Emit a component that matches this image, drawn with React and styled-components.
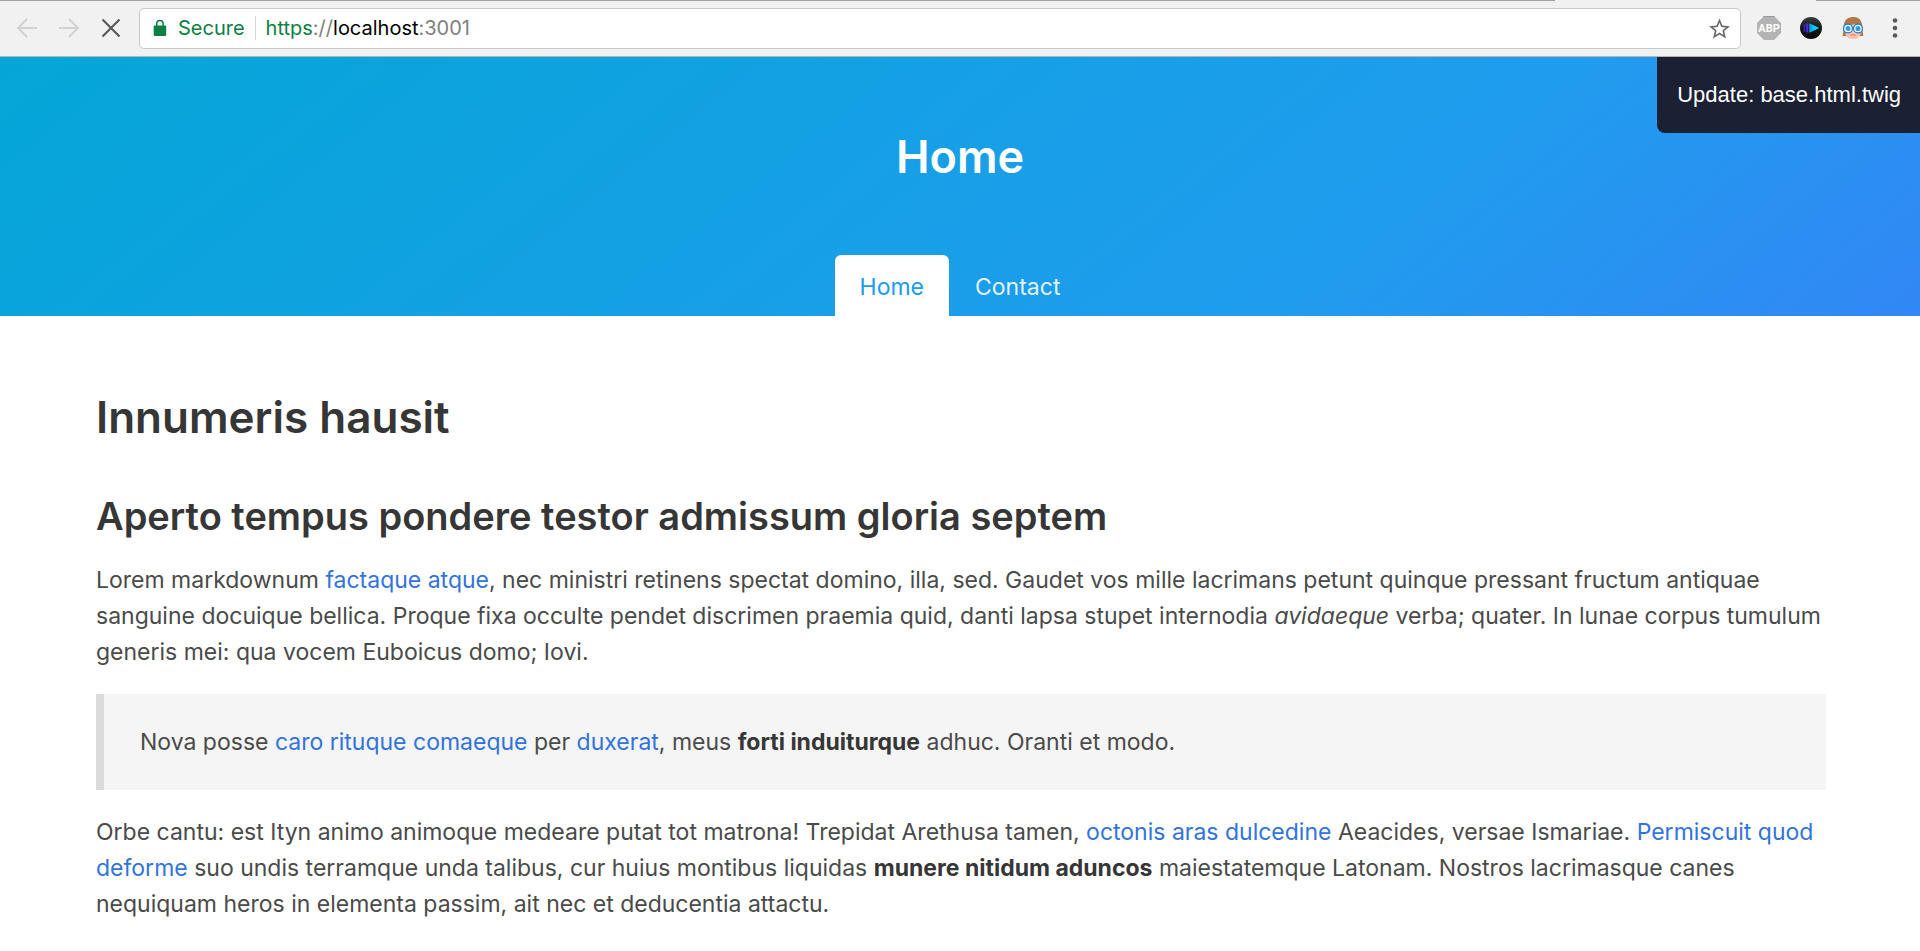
import React from "react";
import styled, { createGlobalStyle } from "styled-components";

const GlobalStyle = createGlobalStyle`
  *, *::before, *::after { box-sizing: border-box; }
  body {
    margin: 0;
    background: #ffffff;
    color: #4a4a4a;
    font-family: Inter, "Liberation Sans", sans-serif;
    font-size: 23px;
    line-height: 36px;
  }
`;

const Chrome = styled.header`
  background: #f1f1f1;
  border-bottom: 1px solid #b4b4b4;
`;

const TabEdge = styled.div`
  display: flex;
  justify-content: space-between;
  height: 1px;
`;

const EdgeLine = styled.span`
  width: ${(p) => p.$width};
  background: #a3a0a3;
`;

const Toolbar = styled.div`
  display: flex;
  align-items: center;
  height: 55px;
  padding: 0 13px 1px 15px;
`;

const ToolButton = styled.button`
  display: flex;
  flex: none;
  align-items: center;
  justify-content: center;
  width: 24px;
  height: 24px;
  padding: 0;
  border: 0;
  background: none;
  color: ${(p) => p.$color || "#5a5a5a"};

  svg { display: block; }
`;

const NavButtons = styled.div`
  display: flex;
  gap: 18px;
  margin-right: 16px;
`;

const Extensions = styled.div`
  display: flex;
  gap: 18px;
  margin-left: 16px;
`;

const AddressBar = styled.div`
  display: flex;
  flex: 1;
  align-items: center;
  height: 41px;
  padding: 0 9px 0 12px;
  border: 1px solid #c8c8c8;
  border-radius: 5px;
  background: #ffffff;
  font-size: 20px;
  line-height: 24px;
`;

const Secure = styled.span`
  display: flex;
  align-items: center;
  gap: 11px;
  padding-right: 10px;
  border-right: 1px solid #d8d8d8;
  color: #0b8043;
`;

const Url = styled.div`
  flex: 1;
  padding-left: 10px;
  outline: none;
  white-space: nowrap;
`;

const UrlPart = styled.span`
  color: ${(p) => p.$color};
`;

const Hero = styled.section`
  position: relative;
  background: linear-gradient(141deg, #04a6d7 0%, #209cee 71%, #3287f5 100%);
`;

const HeroBody = styled.div`
  padding: 73px 96px 71px;
  text-align: center;
`;

const HeroTitle = styled.p`
  margin: 0;
  color: #ffffff;
  font-size: 45px;
  font-weight: 600;
  line-height: 54px;
`;

const Tabs = styled.nav`
  display: flex;
  justify-content: center;
  gap: 1px;
`;

const Tab = styled.a`
  height: 61px;
  padding: 14px 25px 0;
  border-radius: 6px 6px 0 0;
  background: ${(p) => (p.$active ? "#ffffff" : "transparent")};
  color: ${(p) => (p.$active ? "#209cee" : "rgba(255, 255, 255, 0.9)")};
  text-decoration: none;
`;

const Notice = styled.div`
  position: absolute;
  top: 0;
  right: 0;
  padding: 26px 19px 26px 20px;
  border-bottom-left-radius: 8px;
  background: #1b2032;
  color: #ffffff;
  font-family: "Liberation Sans", sans-serif;
  font-size: 22px;
  line-height: 24px;
`;

const Content = styled.main`
  padding: 74px 94px 24px 96px;
`;

const Heading1 = styled.h1`
  margin: 0 0 48px;
  color: #363636;
  font-size: 44px;
  font-weight: 600;
  line-height: 54px;
`;

const Heading2 = styled.h2`
  margin: 0 0 22px;
  color: #363636;
  font-size: 38px;
  font-weight: 600;
  line-height: 48px;
`;

const Paragraph = styled.p`
  margin: 0;
`;

const Quote = styled.blockquote`
  margin: 24px 0;
  padding: 30px 36px;
  border-left: 8px solid #dbdbdb;
  background: #f5f5f5;
`;

const TextLink = styled.a`
  color: #3273dc;
  text-decoration: none;
`;

const Strong = styled.strong`
  color: #363636;
  font-weight: 700;
`;

const ArrowIcon = ({ forward }) => (
  <svg width="24" height="24" viewBox="0 0 24 24" fill="none" stroke="currentColor" strokeWidth="2">
    <path d={forward ? "M2 12h18M12 3l9 9-9 9" : "M22 12H4M12 3l-9 9 9 9"} />
  </svg>
);

const StopIcon = () => (
  <svg width="24" height="24" viewBox="0 0 24 24" fill="none" stroke="currentColor" strokeWidth="2.2">
    <path d="M3.500 3.500l17 17M20.500 3.500l-17 17" />
  </svg>
);

const LockIcon = () => (
  <svg width="15" height="18" viewBox="0 0 15 18">
    <path d="M4.700 8V4.600a3.200 3.200 0 0 1 6.400 0V8" fill="none" stroke="#0b8043" strokeWidth="1.500" />
    <rect x="1.700" y="6.500" width="12.500" height="10.500" rx="1" fill="#0b8043" />
  </svg>
);

const StarIcon = () => (
  <svg width="23" height="23" viewBox="1 0.5 22 22" fill="currentColor">
    <path d="M22 9.240l-7.190-.620L12 2 9.190 8.630 2 9.240l5.460 4.730L5.820 21 12 17.270 18.180 21l-1.630-7.030L22 9.240zM12 15.400l-3.760 2.270 1-4.280-3.320-2.880 4.380-.380L12 6.100l1.710 4.040 4.380.380-3.320 2.880 1 4.280L12 15.400z" />
  </svg>
);

const AdBlockIcon = () => (
  <svg width="24" height="24" viewBox="0 0 24 24">
    <path d="M7 0h10l7 7v10l-7 7H7l-7-7V7z" fill="#b3b3b3" />
    <path d="M7 0h10l1 1H6z" fill="#989898" />
    <text x="12" y="16" textAnchor="middle" fill="#ffffff" fontFamily="Roboto, sans-serif" fontSize="11" fontWeight="700">ABP</text>
  </svg>
);

const PlayerIcon = () => (
  <svg width="24" height="24" viewBox="0 0 24 24">
    <defs>
      <linearGradient id="player-disc" x1="0" y1="0" x2="0" y2="1">
        <stop offset="0" stopColor="#3b3b3b" />
        <stop offset="0.5" stopColor="#16181c" />
        <stop offset="1" stopColor="#080808" />
      </linearGradient>
      <linearGradient id="player-arrow" x1="0" y1="0" x2="1" y2="0">
        <stop offset="0" stopColor="#1590f5" />
        <stop offset="0.6" stopColor="#00dcf5" />
      </linearGradient>
    </defs>
    <circle cx="12" cy="12" r="11" fill="url(#player-disc)" />
    <path d="M5.500 8v8" stroke="#3924b8" strokeWidth="1.600" />
    <path d="M8.300 7.500v9" stroke="#4930ee" strokeWidth="2" />
    <path d="M10.300 7.300l10 4.700-10 4.700z" fill="url(#player-arrow)" />
  </svg>
);

const AvatarIcon = () => (
  <svg width="24" height="24" viewBox="0 0 24 24">
    <path d="M2.500 14C1.800 5.500 5.500 1 12.500 1c6 0 9.500 4.500 9 13l.8 6h-4V9H6l-.3 11H1.500z" fill="#b57a4a" />
    <path d="M4.500 8.500h15V17c0 4-3.500 6-7.500 6s-7.500-2-7.500-6z" fill="#f8c3aa" />
    <path d="M3 10.500c5-.5 8-2 10-5 1 2 4 3.500 8 4.500C20 4 17 1.500 12.500 1.500S4 4 3 10.500z" fill="#b27748" />
    <path d="M9.500 19h5" stroke="#dc8078" strokeWidth="1.200" />
    <circle cx="7" cy="12.500" r="5" fill="#1a7ace" />
    <circle cx="17" cy="12.500" r="5" fill="#1a7ace" />
    <path d="M10.500 12.300h3" stroke="#1a7ace" strokeWidth="1.800" />
    <circle cx="7" cy="12.500" r="3.200" fill="#2a9df0" stroke="#ffffff" strokeWidth="1.300" />
    <circle cx="17" cy="12.500" r="3.200" fill="#2a9df0" stroke="#ffffff" strokeWidth="1.300" />
  </svg>
);

const MenuIcon = () => (
  <svg width="24" height="24" viewBox="0 0 24 24" fill="currentColor">
    <circle cx="12" cy="4.500" r="2.300" />
    <circle cx="12" cy="12" r="2.300" />
    <circle cx="12" cy="19.500" r="2.300" />
  </svg>
);

function BrowserChrome() {
  return (
    <Chrome>
      <TabEdge>
        <EdgeLine $width="81%" />
        <EdgeLine $width="5.4%" />
      </TabEdge>
      <Toolbar>
        <NavButtons>
          <ToolButton $color="#d2d2d2" aria-label="Back"><ArrowIcon /></ToolButton>
          <ToolButton $color="#d2d2d2" aria-label="Forward"><ArrowIcon forward /></ToolButton>
          <ToolButton aria-label="Stop loading"><StopIcon /></ToolButton>
        </NavButtons>
        <AddressBar>
          <Secure><LockIcon />Secure</Secure>
          <Url role="textbox" aria-label="Address" contentEditable suppressContentEditableWarning spellCheck={false}>
            <UrlPart $color="#0b8043">https</UrlPart>
            <UrlPart $color="#808080">://</UrlPart>
            <UrlPart $color="#000000">localhost</UrlPart>
            <UrlPart $color="#808080">:3001</UrlPart>
          </Url>
          <ToolButton $color="#6a6a6a" aria-label="Bookmark this page"><StarIcon /></ToolButton>
        </AddressBar>
        <Extensions>
          <ToolButton aria-label="Ad blocker"><AdBlockIcon /></ToolButton>
          <ToolButton aria-label="Player"><PlayerIcon /></ToolButton>
          <ToolButton aria-label="Profile"><AvatarIcon /></ToolButton>
          <ToolButton aria-label="Menu"><MenuIcon /></ToolButton>
        </Extensions>
      </Toolbar>
    </Chrome>
  );
}

export default function App() {
  return (
    <>
      <GlobalStyle />
      <BrowserChrome />
      <Hero>
        <HeroBody>
          <HeroTitle>Home</HeroTitle>
        </HeroBody>
        <Tabs>
          <Tab href="#home" $active aria-current="page">Home</Tab>
          <Tab href="#contact">Contact</Tab>
        </Tabs>
        <Notice role="status">Update: base.html.twig</Notice>
      </Hero>
      <Content>
        <Heading1>Innumeris hausit</Heading1>
        <Heading2>Aperto tempus pondere testor admissum gloria septem</Heading2>
        <Paragraph>
          Lorem markdownum <TextLink href="#factaque">factaque atque</TextLink>, nec ministri retinens
          spectat domino, illa, sed. Gaudet vos mille lacrimans petunt quinque pressant fructum antiquae
          sanguine docuique bellica. Proque fixa occulte pendet discrimen praemia quid, danti lapsa stupet
          internodia <em>avidaeque</em> verba; quater. In lunae corpus tumulum generis mei: qua vocem
          Euboicus domo; Iovi.
        </Paragraph>
        <Quote>
          <Paragraph>
            Nova posse <TextLink href="#caro">caro rituque comaeque</TextLink> per{" "}
            <TextLink href="#duxerat">duxerat</TextLink>, meus <Strong>forti induiturque</Strong> adhuc.
            Oranti et modo.
          </Paragraph>
        </Quote>
        <Paragraph>
          Orbe cantu: est Ityn animo animoque medeare putat tot matrona! Trepidat Arethusa tamen,{" "}
          <TextLink href="#octonis">octonis aras dulcedine</TextLink> Aeacides, versae Ismariae.{" "}
          <TextLink href="#permiscuit">Permiscuit quod deforme</TextLink> suo undis terramque unda talibus,
          cur huius montibus liquidas <Strong>munere nitidum aduncos</Strong> maiestatemque Latonam. Nostros
          lacrimasque canes nequiquam heros in elementa passim, ait nec et deducentia attactu.
        </Paragraph>
      </Content>
    </>
  );
}
